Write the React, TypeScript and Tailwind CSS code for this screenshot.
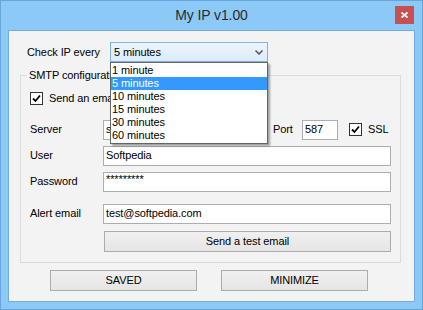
const FONT = "font-['Liberation_Sans',Arial,sans-serif]"

const OPTIONS = ['1 minute', '5 minutes', '10 minutes', '15 minutes', '30 minutes', '60 minutes']

function CheckBox() {
  return (
    <span className="flex h-[13px] w-[13px] shrink-0 items-center justify-center border border-[#333] bg-white">
      <svg width="9" height="9" viewBox="0 0 9 9">
        <path d="M1 4.5 L3.5 7 L8 1.5" fill="none" stroke="#000" strokeWidth="1.8" />
      </svg>
    </span>
  )
}

function TextBox({ value, className = '' }: { value?: string; className?: string }) {
  return (
    <div
      className={`flex h-[20px] items-center border border-[#abadb3] bg-white px-[2px] text-[11px] text-black ${className}`}
    >
      {value}
    </div>
  )
}

function Button({ label, className = '' }: { label: string; className?: string }) {
  return (
    <button
      type="button"
      className={`flex items-center justify-center border border-[#acacac] bg-gradient-to-b from-[#f0f0f0] to-[#e5e5e5] text-[11px] text-black ${className}`}
    >
      {label}
    </button>
  )
}

function Row({ label, children }: { label: string; children: React.ReactNode }) {
  return (
    <div className="flex items-center">
      <span className="w-[73px] shrink-0 text-[11px] text-black">{label}</span>
      {children}
    </div>
  )
}

export default function App() {
  return (
    <div
      className={`${FONT} flex h-[310px] w-[423px] flex-col border border-[#6aa4d8] bg-[#8cc9f7] tracking-[-0.1px]`}
    >
      {/* Title bar */}
      <div className="relative flex h-[29px] shrink-0 items-center justify-center">
        <span className="text-[14px] text-[#2b2b2b]">My IP v1.00</span>
        <div className="absolute right-[8px] top-[5px] flex h-[18px] w-[19px] items-center justify-center bg-[#c75050]">
          <svg width="7" height="6" viewBox="0 0 7 6">
            <path d="M0.5 0.5 L6.5 5.5 M6.5 0.5 L0.5 5.5" stroke="#fff" strokeWidth="1.8" />
          </svg>
        </div>
      </div>

      {/* Client area */}
      <div className="mx-[7px] h-[272px] shrink-0 border border-[#74ace0] bg-[#f3f3f3]">
        <div className="mt-[11px] flex items-center pl-[18px]">
          <span className="w-[83px] text-[11px] text-black">Check IP every</span>
          <div className="relative z-10">
            <div className="flex h-[20px] w-[158px] items-center justify-between border border-[#7eb4ea] bg-gradient-to-b from-[#ecf4fc] to-[#dcecfc] pl-[3px] pr-[4px] text-[11px] text-black">
              <span>5 minutes</span>
              <svg width="8" height="5" viewBox="0 0 8 5">
                <path d="M0.5 0.5 L4 4 L7.5 0.5" fill="none" stroke="#555" strokeWidth="1.5" />
              </svg>
            </div>
            <ul className="absolute left-0 top-full w-[158px] border border-[#646464] bg-white py-[1px] shadow-[2px_2px_2px_rgba(0,0,0,0.35)]">
              {OPTIONS.map((o) => (
                <li
                  key={o}
                  className={`flex h-[13px] items-center pl-[1px] text-[11px] ${
                    o === '5 minutes' ? 'bg-[#3399ff] text-white' : 'text-black'
                  }`}
                >
                  {o}
                </li>
              ))}
            </ul>
          </div>
        </div>

        {/* SMTP group */}
        <div className="relative ml-[11px] mt-[13px] h-[188px] w-[381px] border border-[#dcdcdc]">
          <span className="absolute left-[6px] top-[-7px] bg-[#f3f3f3] px-[2px] text-[11px] leading-[13px] text-black">
            SMTP configuration
          </span>
          <div className="flex flex-col pl-[9px]">
            <div className="mt-[14px] flex items-center gap-[6px]">
              <CheckBox />
              <span className="text-[11px] text-black">Send an email</span>
            </div>
            <div className="mt-[13px]">
              <Row label="Server">
                <TextBox value="smtp.gmail.com" className="w-[164px]" />
                <span className="ml-[6px] w-[29px] text-[11px] text-black">Port</span>
                <TextBox value="587" className="w-[36px]" />
                <span className="ml-[11px]">
                  <CheckBox />
                </span>
                <span className="ml-[6px] text-[11px] text-black">SSL</span>
              </Row>
            </div>
            <div className="mt-[6px]">
              <Row label="User">
                <TextBox value="Softpedia" className="w-[288px]" />
              </Row>
            </div>
            <div className="mt-[6px]">
              <Row label="Password">
                <div className="h-[20px] w-[288px] border border-[#abadb3] bg-white px-[2px] text-[11px] leading-[12px] text-black">
                  *********
                </div>
              </Row>
            </div>
            <div className="mt-[12px]">
              <Row label="Alert email">
                <TextBox value="test@softpedia.com" className="w-[288px]" />
              </Row>
            </div>
            <div className="mt-[7px] flex pl-[74px]">
              <Button label="Send a test email" className="h-[21px] w-[287px]" />
            </div>
          </div>
        </div>

        <div className="mt-[7px] flex pl-[41px]">
          <Button label="SAVED" className="h-[21px] w-[147px]" />
          <Button label="MINIMIZE" className="ml-[24px] h-[21px] w-[147px]" />
        </div>
      </div>
    </div>
  )
}
